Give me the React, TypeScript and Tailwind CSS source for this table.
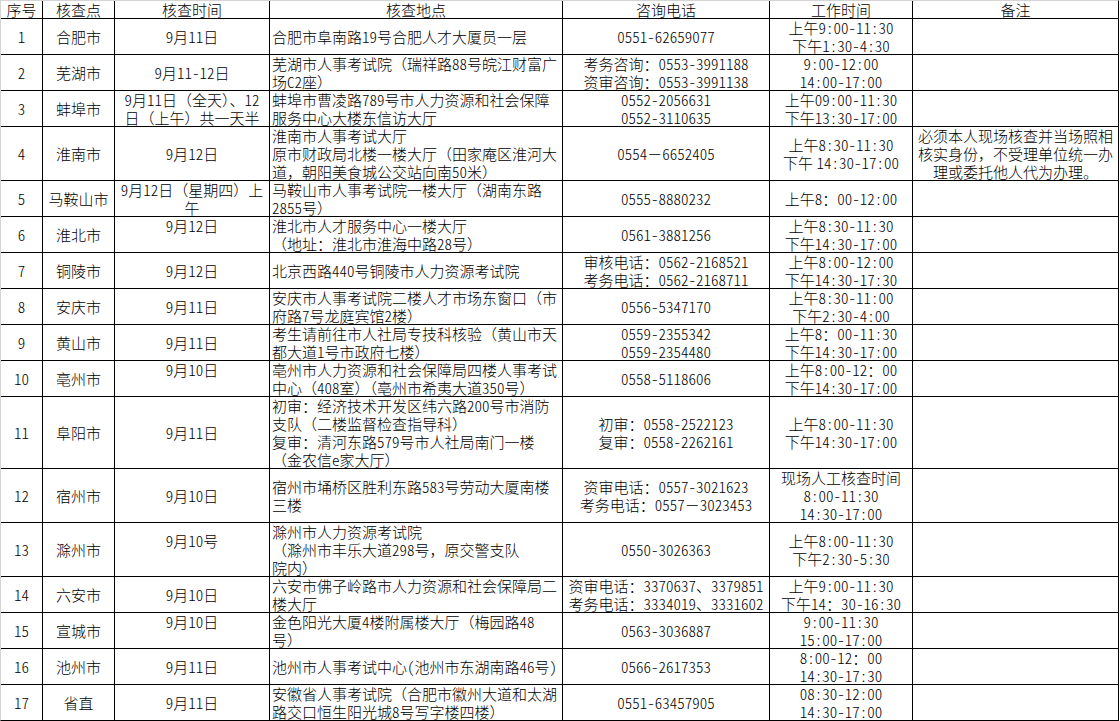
import React from "react";

type VAlign = "mid" | "top" | "drop";

interface Row {
  no: string;
  city: string;
  date: string[];
  dateAlign?: VAlign;
  place: string[];
  phone: string[];
  hours: string[];
  note?: string[];
}

const HEAD = ["序号", "核查点", "核查时间", "核查地点", "咨询电话", "工作时间", "备注"];

const ROWS: Row[] = [
  {
    no: "1",
    city: "合肥市",
    date: ["9月11日"],
    place: ["合肥市阜南路19号合肥人才大厦员一层"],
    phone: ["0551-62659077"],
    hours: ["上午9:00-11:30", "下午1:30-4:30"],
  },
  {
    no: "2",
    city: "芜湖市",
    date: ["9月11-12日"],
    place: ["芜湖市人事考试院（瑞祥路88号皖江财富广", "场C2座）"],
    phone: ["考务咨询：0553-3991188", "资审咨询：0553-3991138"],
    hours: ["9:00-12:00", "14:00-17:00"],
  },
  {
    no: "3",
    city: "蚌埠市",
    date: ["9月11日（全天）、12", "日（上午）共一天半"],
    place: ["蚌埠市曹凌路789号市人力资源和社会保障", "服务中心大楼东信访大厅"],
    phone: ["0552-2056631", "0552-3110635"],
    hours: ["上午09:00-11:30", "下午13:30-17:00"],
  },
  {
    no: "4",
    city: "淮南市",
    date: ["9月12日"],
    place: [
      "淮南市人事考试大厅",
      "原市财政局北楼一楼大厅（田家庵区淮河大",
      "道，朝阳美食城公交站向南50米）",
    ],
    phone: ["0554－6652405"],
    hours: ["上午8:30-11:30", "下午 14:30-17:00"],
    note: ["必须本人现场核查并当场照相", "核实身份，不受理单位统一办", "理或委托他人代为办理。"],
  },
  {
    no: "5",
    city: "马鞍山市",
    date: ["9月12日（星期四）上", "午"],
    place: ["马鞍山市人事考试院一楼大厅（湖南东路", "2855号）"],
    phone: ["0555-8880232"],
    hours: ["上午8：00-12:00"],
  },
  {
    no: "6",
    city: "淮北市",
    date: ["9月12日"],
    dateAlign: "top",
    place: ["淮北市人才服务中心一楼大厅", "（地址：淮北市淮海中路28号）"],
    phone: ["0561-3881256"],
    hours: ["上午8:30-11:30", "下午14:30-17:00"],
  },
  {
    no: "7",
    city: "铜陵市",
    date: ["9月12日"],
    place: ["北京西路440号铜陵市人力资源考试院"],
    phone: ["审核电话：0562-2168521", "考务电话：0562-2168711"],
    hours: ["上午8:00-12:00", "下午14:30-17:30"],
  },
  {
    no: "8",
    city: "安庆市",
    date: ["9月11日"],
    place: ["安庆市人事考试院二楼人才市场东窗口（市", "府路7号龙庭宾馆2楼）"],
    phone: ["0556-5347170"],
    hours: ["上午8:30-11:00", "下午2:30-4:00"],
  },
  {
    no: "9",
    city: "黄山市",
    date: ["9月11日"],
    place: ["考生请前往市人社局专技科核验（黄山市天", "都大道1号市政府七楼）"],
    phone: ["0559-2355342", "0559-2354480"],
    hours: ["上午8：00-11:30", "下午14:30-17:00"],
  },
  {
    no: "10",
    city: "亳州市",
    date: ["9月10日"],
    dateAlign: "top",
    place: ["亳州市人力资源和社会保障局四楼人事考试", "中心（408室）（亳州市希夷大道350号）"],
    phone: ["0558-5118606"],
    hours: ["上午8:00-12：00", "下午14:30-17:00"],
  },
  {
    no: "11",
    city: "阜阳市",
    date: ["9月11日"],
    place: [
      "初审：经济技术开发区纬六路200号市消防",
      "支队（二楼监督检查指导科）",
      "复审：清河东路579号市人社局南门一楼",
      "（金农信e家大厅）",
    ],
    phone: ["初审：0558-2522123", "复审：0558-2262161"],
    hours: ["上午8:00-11:30", "下午14:30-17:00"],
  },
  {
    no: "12",
    city: "宿州市",
    date: ["9月10日"],
    place: ["宿州市埇桥区胜利东路583号劳动大厦南楼", "三楼"],
    phone: ["资审电话：0557-3021623", "考务电话：0557－3023453"],
    hours: ["现场人工核查时间", "8:00-11:30", "14:30-17:00"],
  },
  {
    no: "13",
    city: "滁州市",
    date: ["9月10号"],
    dateAlign: "drop",
    place: ["滁州市人力资源考试院", "（滁州市丰乐大道298号，原交警支队", "院内）"],
    phone: ["0550-3026363"],
    hours: ["上午8:00-11:30", "下午2:30-5:30"],
  },
  {
    no: "14",
    city: "六安市",
    date: ["9月10日"],
    place: ["六安市佛子岭路市人力资源和社会保障局二", "楼大厅"],
    phone: ["资审电话：3370637、3379851", "考务电话：3334019、3331602"],
    hours: ["上午9:00-11:30", "下午14：30-16:30"],
  },
  {
    no: "15",
    city: "宣城市",
    date: ["9月10日"],
    dateAlign: "top",
    place: ["金色阳光大厦4楼附属楼大厅（梅园路48", "号）"],
    phone: ["0563-3036887"],
    hours: ["9:00-11:30", "15:00-17:00"],
  },
  {
    no: "16",
    city: "池州市",
    date: ["9月11日"],
    place: ["池州市人事考试中心(池州市东湖南路46号)"],
    phone: ["0566-2617353"],
    hours: ["8:00-12：00", "14:30-17:30"],
  },
  {
    no: "17",
    city: "省直",
    date: ["9月11日"],
    place: ["安徽省人事考试院（合肥市徽州大道和太湖", "路交口恒生阳光城8号写字楼四楼）"],
    phone: ["0551-63457905"],
    hours: ["08:30-12:00", "14:30-17:00"],
  },
];

// ASCII runs get half-width glyphs, like the spreadsheet's 宋体 digits
function Line({ text }: { text: string }) {
  const parts = text.split(/([\x21-\x7e]+)/).filter(Boolean);
  return (
    <span className="block h-[18px] whitespace-nowrap">
      {parts.map((p, i) => (
        <span
          key={i}
          className={
            /^[\x21-\x7e]+$/.test(p)
              ? "inline-block h-[18px] whitespace-pre [font-feature-settings:'hwid']"
              : "inline-block h-[18px] whitespace-pre"
          }
        >
          {p}
        </span>
      ))}
    </span>
  );
}

function Cell({
  lines,
  left = false,
  align = "mid",
}: {
  lines: string[];
  left?: boolean;
  align?: VAlign;
}) {
  return (
    <div
      className={[
        "flex flex-col bg-white",
        left ? "items-start pl-[2px] text-left" : "items-center text-center",
        align === "mid" ? "justify-center" : "justify-start",
        align === "drop" ? "pt-[9px]" : "",
      ].join(" ")}
    >
      {lines.map((line, i) => (
        <Line key={i} text={line} />
      ))}
    </div>
  );
}

export default function App() {
  return (
    <div className="min-h-[721px] bg-white text-black">
      <div
        className={
          "grid w-fit gap-px bg-black border border-black border-l-[#d4d4d4] border-t-[#d4d4d4] " +
          "grid-cols-[41px_71px_154px_292px_206px_142px_205px] " +
          "grid-rows-[17px_35px_35px_35px_53px_35px_35px_35px_35px_35px_35px_71px_53px_53px_35px_35px_35px_35px] " +
          "font-['Noto_Sans_CJK_SC',sans-serif] text-[15px] font-light leading-[18px]"
        }
      >
        {HEAD.map((h) => (
          <Cell key={h} lines={[h]} />
        ))}

        {ROWS.map((r) => (
          <React.Fragment key={r.no}>
            <Cell lines={[r.no]} />
            <Cell lines={[r.city]} />
            <Cell lines={r.date} align={r.dateAlign ?? "mid"} />
            <Cell lines={r.place} left />
            <Cell lines={r.phone} />
            <Cell lines={r.hours} />
            <Cell lines={r.note ?? []} />
          </React.Fragment>
        ))}
      </div>
    </div>
  );
}
